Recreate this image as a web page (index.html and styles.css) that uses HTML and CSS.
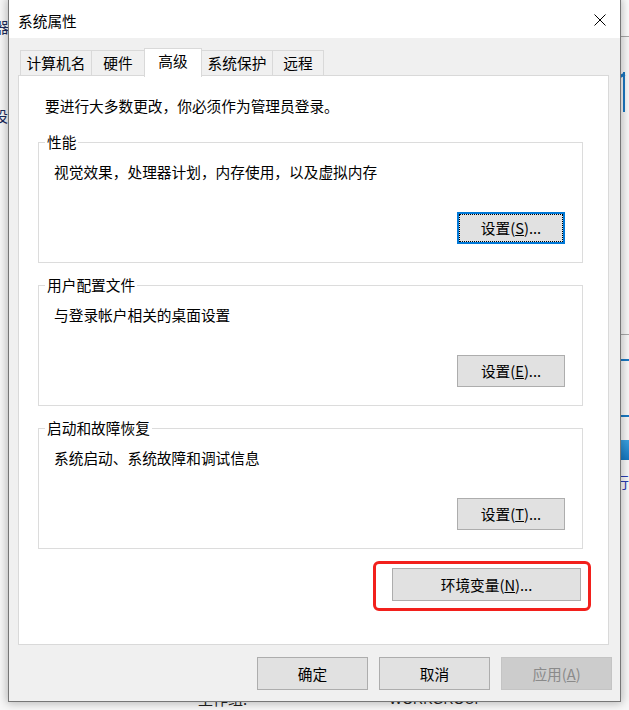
FILE: index.html
```html
<!DOCTYPE html>
<html lang="zh-CN">
<head>
<meta charset="utf-8">
<title>系统属性</title>
<link rel="stylesheet" href="styles.css">
</head>
<body>
<div class="desktop">
  <div class="bgwin">
    <span class="bg-char bg-c1">器</span>
    <span class="bg-char bg-c2">设</span>
    <div class="bg-right-top"></div>
    <div class="bg-right-mid"></div>
    <div class="bg-blue bg-b1"></div>
    <div class="bg-blue bg-b2"></div>
    <div class="bg-blue bg-b3"></div>
    <div class="bg-blue bg-b4"></div>
    <div class="bg-blue-block"></div>
    <span class="bg-char bg-c3">行</span>
    <span class="bg-text bg-t1">工作组:</span>
    <span class="bg-text bg-t2">WORKGROUP</span>
  </div>

  <div class="dialog">
    <div class="titlebar">
      <span class="title">系统属性</span>
      <svg class="close" width="12" height="12" viewBox="0 0 12 12" aria-hidden="true">
        <path d="M0.5 0.5 L11.5 11.5 M11.5 0.5 L0.5 11.5" stroke="#000" stroke-width="1" fill="none"/>
      </svg>
    </div>
    <div class="dlg-body">
      <div class="tabs">
        <div class="tab tab-1">计算机名</div>
        <div class="tab tab-2">硬件</div>
        <div class="tab tab-3 selected">高级</div>
        <div class="tab tab-4">系统保护</div>
        <div class="tab tab-5">远程</div>
      </div>
      <div class="panel">
        <p class="intro">要进行大多数更改，你必须作为管理员登录。</p>

        <fieldset class="group group-first">
          <legend>性能</legend>
          <div class="group-body">
            <p class="desc">视觉效果，处理器计划，内存使用，以及虚拟内存</p>
            <div class="btn-row"><button class="btn btn-set focused">设置(<u>S</u>)...</button></div>
          </div>
        </fieldset>

        <fieldset class="group">
          <legend>用户配置文件</legend>
          <div class="group-body">
            <p class="desc">与登录帐户相关的桌面设置</p>
            <div class="btn-row"><button class="btn btn-set">设置(<u>E</u>)...</button></div>
          </div>
        </fieldset>

        <fieldset class="group">
          <legend>启动和故障恢复</legend>
          <div class="group-body">
            <p class="desc">系统启动、系统故障和调试信息</p>
            <div class="btn-row"><button class="btn btn-set">设置(<u>T</u>)...</button></div>
          </div>
        </fieldset>

        <div class="env-row"><button class="btn btn-env">环境变量(<u>N</u>)...</button></div>
        <div class="highlight"></div>
      </div>
      <div class="footer">
        <button class="btn btn-foot">确定</button>
        <button class="btn btn-foot">取消</button>
        <button class="btn btn-foot disabled">应用(<u>A</u>)</button>
      </div>
    </div>
  </div>
</div>
</body>
</html>
```

FILE: styles.css
```css
html, body {
  margin: 0;
  padding: 0;
}

body {
  width: 629px;
  height: 710px;
  overflow: hidden;
  background: #f7f7f7;
  font-family: "Noto Sans CJK SC", "Microsoft YaHei", sans-serif;
  font-size: 14.7px;
  color: #000;
}

.desktop {
  position: relative;
  width: 629px;
  height: 710px;
  overflow: hidden;
}

/* ---------- background window bits ---------- */
.bgwin {
  position: absolute;
  inset: 0;
  background: #f7f7f7;
}

.bg-char {
  position: absolute;
  font-size: 15px;
  line-height: 16px;
  color: #1c2c5c;
}
.bg-c1 { left: -6px; top: 19px; }
.bg-c2 { left: -7px; top: 108px; }
.bg-c3 { left: 614px; top: 474px; color: #2b3bb0; }

.bg-right-top {
  position: absolute;
  left: 618px;
  top: 0;
  width: 11px;
  height: 36px;
  background: #fcfcfc;
  border-bottom: 1px solid #a8a8a8;
}
.bg-right-mid {
  position: absolute;
  left: 618px;
  top: 334px;
  width: 11px;
  height: 0;
  border-top: 1px solid #a8a8a8;
}
.bg-blue {
  position: absolute;
  background: #1a78c2;
}
.bg-b1 { left: 623px; top: 72px; width: 2px; height: 40px; }
.bg-b2 { left: 619px; top: 74px; width: 6px; height: 3px; transform: rotate(-25deg); }
.bg-b3 { left: 620px; top: 359px; width: 9px; height: 2px; }
.bg-b4 { left: 620px; top: 415px; width: 9px; height: 2px; }
.bg-blue-block {
  position: absolute;
  left: 620px;
  top: 440px;
  width: 9px;
  height: 20px;
  background: linear-gradient(#3aa0e0, #1577c0);
}

.bg-text {
  position: absolute;
  top: 690px;
  font-size: 15px;
  line-height: 18px;
  color: #222;
}
.bg-t1 { left: 198px; }
.bg-t2 { left: 389px; font-family: "Liberation Sans", sans-serif; font-size: 14px; }

/* ---------- dialog ---------- */
.dialog {
  position: absolute;
  left: 8px;
  top: -1px;
  width: 613px;
  box-sizing: border-box;
  border: 1px solid #767676;
  background: #f0f0f0;
  box-shadow: 0 0 9px 1px rgba(0, 0, 0, 0.28);
}

.titlebar {
  height: 38px;
  background: #fff;
  display: flex;
  align-items: center;
  justify-content: space-between;
  padding: 0 14px 0 9px;
  box-sizing: border-box;
}
.title {
  line-height: 20px;
  margin-top: 3px;
}
.close {
  display: block;
  margin-top: 1px;
}

.dlg-body {
  padding-top: 10px;
}

/* ---------- tabs ---------- */
.tabs {
  display: flex;
  align-items: flex-end;
  padding-left: 11px;
  margin-bottom: -1px;
  height: 28px;
}
.tab {
  box-sizing: border-box;
  height: 26px;
  line-height: 24px;
  text-align: center;
  border: 1px solid #d9d9d9;
  border-bottom: none;
  background: #f0f0f0;
  margin-left: -1px;
}
.tab-1 { width: 72px; margin-left: 0; }
.tab-2 { width: 54px; }
.tab-3 { width: 58px; }
.tab-4 { width: 72px; }
.tab-5 { width: 52px; }

.tab.selected {
  height: 29px;
  margin-bottom: -1px;
  background: #fff;
  position: relative;
  z-index: 2;
}

/* ---------- panel ---------- */
.panel {
  position: relative;
  margin: 0 11px 0 9px;
  border: 1px solid #d9d9d9;
  background: #fff;
  padding: 20px 25px 43px 19px;
}

.intro {
  margin: 0 0 0 7px;
  line-height: 20px;
}

.group {
  margin: 12px 0 0 0;
  padding: 0;
  border: 1px solid #dcdcdc;
  min-inline-size: 0;
}
.group-first {
  margin-top: 16px;
}
.group legend {
  margin-left: 6px;
  padding: 0 2px;
  line-height: 20px;
}
.group-body {
  padding: 0 17px 0 15px;
}
.desc {
  margin: 10px 0 0 0;
  line-height: 20px;
}
.btn-row {
  display: flex;
  justify-content: flex-end;
  margin-top: 30px;
  margin-bottom: 18px;
}

/* ---------- buttons ---------- */
.btn {
  box-sizing: border-box;
  font-family: inherit;
  font-size: 14.7px;
  color: #000;
  background: #e1e1e1;
  border: 1px solid #adadad;
  padding: 0;
  margin: 0;
  line-height: 20px;
  display: block;
}
.btn-set {
  width: 108px;
  height: 32px;
}
.btn.focused {
  border: 2px solid #0078d7;
  outline: 1px dotted #000;
  outline-offset: -3px;
}

.env-row {
  display: flex;
  justify-content: flex-end;
  margin-top: 19px;
  padding-right: 2px;
}
.btn-env {
  width: 189px;
  height: 33px;
}

.highlight {
  position: absolute;
  left: 354px;
  top: 485px;
  width: 218px;
  height: 50px;
  box-sizing: border-box;
  border: 3px solid #f2201c;
  border-radius: 6px;
}

/* ---------- footer ---------- */
.footer {
  display: flex;
  justify-content: flex-end;
  gap: 11px;
  padding: 12px 8px 11px 0;
}
.btn-foot {
  width: 111px;
  height: 33px;
}
.btn-foot.disabled {
  background: #cccccc;
  border-color: #c4c4c4;
  color: #8a8a8a;
}
```
